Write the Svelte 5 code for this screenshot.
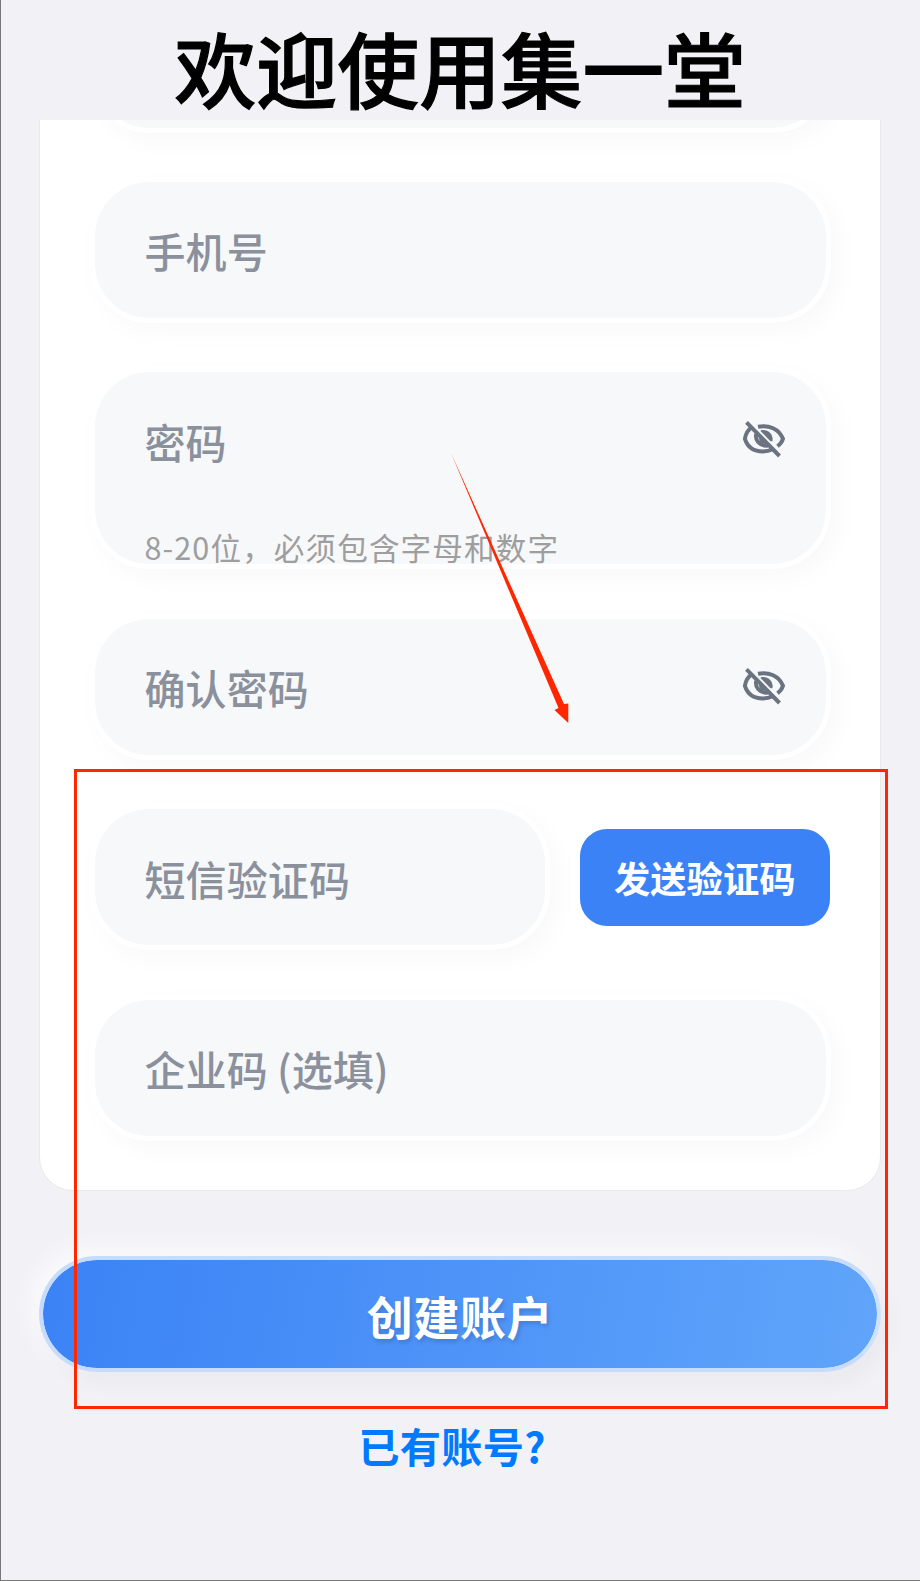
<script>
  const upper = [
    { label: '手机号' },
    { label: '密码', hint: '8-20位，必须包含字母和数字', secret: true },
    { label: '确认密码', secret: true },
  ];
</script>

{#snippet field(item)}
  <div class="field" class:tall={item.hint}>
    <div class="line">
      <span class="placeholder">{item.label}</span>
      {#if item.secret}
        <svg class="eye" viewBox="0 0 60 60" aria-hidden="true">
          <path d="M17 17.2C13.5 19.5 10.8 23 9.9 28.8C12.5 37 19 41.4 28 41.4C31.5 41.4 34.5 40.8 37 39.5" />
          <path d="M23 16.8C34 14.6 44 19 48 28.8C47 32.3 45 34.3 42.5 36.3" />
          <path d="M21.2 23.8C20 30 24 36.3 33 35.6" />
          <path class="iris" d="M26 20.3C33 19 38.5 24 37.5 31.3H35.5L25.5 21Z" />
          <path class="core" d="M25.5 28C25.5 31 27.5 32.5 30 32.2" />
          <path d="M11.5 12.3L44.5 46" />
        </svg>
      {/if}
    </div>
    {#if item.hint}<div class="hint">{item.hint}</div>{/if}
  </div>
{/snippet}

<main>
  <h1>欢迎使用集一堂</h1>
  <div class="viewport">
    <section class="card">
      <div class="field"></div>
      {#each upper as item}
        {@render field(item)}
      {/each}
      <div class="code-row">
        {@render field({ label: '短信验证码' })}
        <button class="send">发送验证码</button>
      </div>
      {@render field({ label: '企业码 (选填)' })}
    </section>
  </div>
  <button class="create"><span>创建账户</span></button>
  <a class="login">已有账号?</a>

  <svg class="marks" viewBox="0 0 920 1581" aria-hidden="true">
    <rect x="75.5" y="770.5" width="811" height="637" fill="none" stroke="#ff2600" stroke-width="3" />
    <path d="M451 453L564 704L568.3 703.5L568.3 723L554.5 710L558.5 708Z" fill="#ff2600" />
  </svg>
</main>

<style>
  :global(body) {
    background: #f2f1f6;
  }
  main {
    position: relative;
    box-sizing: border-box;
    width: 920px;
    height: 1581px;
    overflow: hidden;
    display: flex;
    flex-direction: column;
    background: #f2f1f6;
    border-left: 1px solid #777;
    border-bottom: 1px solid #777;
    font-family: 'Noto Sans CJK SC', sans-serif;
  }
  h1 {
    margin: 0;
    height: 120px;
    flex: none;
    padding-right: 1px;
    text-align: center;
    font-size: 81.6px;
    line-height: 134px;
    font-weight: 500;
    color: #000;
    -webkit-text-stroke: 1.2px #000;
  }
  .viewport {
    height: 1088px;
    flex: none;
    overflow: hidden;
    display: flex;
    flex-direction: column;
    justify-content: flex-start;
  }
  .card {
    box-sizing: border-box;
    width: 842px;
    height: 1170.5px;
    flex: none;
    margin: -100px 0 0 38px;
    padding: 0 49.5px 49px 49.5px;
    display: flex;
    flex-direction: column;
    justify-content: flex-end;
    gap: 44.4px;
    background: #fff;
    border: 1.5px solid #e9e9ec;
    border-radius: 34px;
  }
  .field {
    box-sizing: border-box;
    height: 146px;
    flex: none;
    border: 5px solid #fff;
    border-radius: 59px;
    background: #f7f8fa;
    background-clip: padding-box;
    box-shadow: 8px 9px 26px rgba(0, 0, 0, 0.026);
    padding-left: 50px;
  }
  .tall {
    height: 202px;
  }
  .line {
    height: 136px;
    display: flex;
    align-items: center;
    justify-content: space-between;
  }
  .placeholder {
    font-size: 41px;
    letter-spacing: 0.1px;
    line-height: 60px;
    font-weight: 500;
    color: #8a909c;
    padding-top: 1px;
    white-space: pre;
  }
  .eye {
    width: 60px;
    height: 60px;
    flex: none;
    margin-right: 31px;
    fill: none;
    stroke: #6b7280;
    stroke-width: 4;
  }
  .eye .iris {
    fill: #6b7280;
    stroke: none;
  }
  .eye .core {
    stroke-width: 3;
  }
  .hint {
    margin-top: 16.5px;
    height: 44px;
    line-height: 44px;
    font-size: 30.6px;
    letter-spacing: 1.1px;
    color: #9e9e9e;
    white-space: nowrap;
  }
  .code-row {
    display: flex;
    align-items: center;
  }
  .code-row :global(.field) {
    width: 460.5px;
  }
  button {
    font-family: inherit;
    border: 0;
    padding: 0;
    color: #fff;
  }
  .send {
    width: 250.5px;
    height: 97px;
    margin-left: 29.5px;
    flex: none;
    border-radius: 27px;
    background: #3b82f6;
    font-size: 36.3px;
    line-height: 96px;
    font-weight: 700;
  }
  .create {
    box-sizing: border-box;
    width: 842px;
    height: 115.5px;
    flex: none;
    margin: 48.4px 0 0 38px;
    border: 4.5px solid #c7dcfd;
    border-right-color: #cfe2fd;
    border-radius: 58px;
    background: linear-gradient(100deg, #3b82f6, #60a5fa) padding-box;
    box-shadow: 8px 10px 22px rgba(0, 0, 0, 0.04), -8px -8px 26px rgba(255, 255, 255, 0.7);
    font-size: 46px;
    letter-spacing: 0.6px;
    font-weight: 700;
    text-shadow: 2px 3px 4px rgba(0, 0, 0, 0.15);
  }
  .create span {
    position: relative;
    top: 1px;
  }
  .login {
    align-self: center;
    margin: 43px 17px 0 0;
    font-size: 41.2px;
    letter-spacing: 0.3px;
    line-height: 60px;
    font-weight: 700;
    color: #007aff;
  }
  .marks {
    position: absolute;
    left: -1px;
    top: 0;
    width: 920px;
    height: 1581px;
    pointer-events: none;
  }
</style>
